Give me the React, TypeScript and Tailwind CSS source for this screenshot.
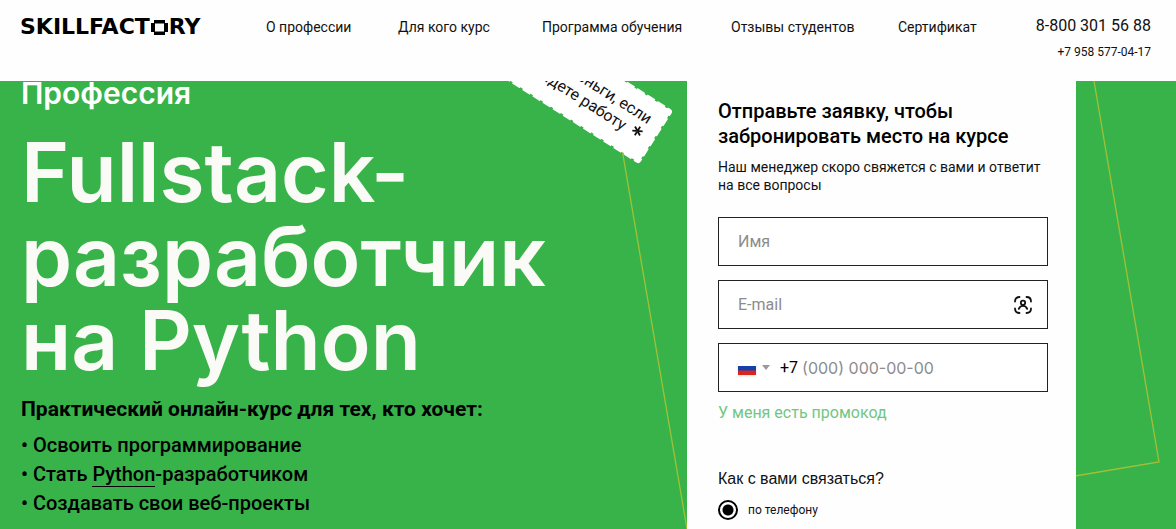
const navItems = [
  'О профессии',
  'Для кого курс',
  'Программа обучения',
  'Отзывы студентов',
  'Сертификат',
];

const field =
  'flex h-[49px] items-center border border-[#222] bg-white px-[19px] text-base text-black';

function Logo() {
  return (
    <a
      href="#"
      aria-label="SKILLFACTORY"
      className="flex items-center font-['DejaVu_Sans',sans-serif] text-[22px] leading-6 font-bold text-black"
    >
      SKILLFACT
      <svg viewBox="0 0 19 15" className="h-[15px] w-[19px]" fill="currentColor" aria-hidden="true">
        <path d="M4 0h11v3.500H4zM4 11.500h11V15H4zM1 3h4v9H1zM14 3h4v9h-4z" />
      </svg>
      RY
    </a>
  );
}

function Header() {
  return (
    <header className="flex h-[81px] items-start bg-[#fefefe] pt-3 pr-[25px] pl-5">
      <div className="w-[246px] shrink-0 pt-[3px]">
        <Logo />
      </div>
      <nav className="grid flex-1 grid-cols-[132fr_144fr_189fr_167fr_80fr] pt-[3px] text-sm leading-6 whitespace-nowrap">
        {navItems.map((item) => (
          <a key={item} href="#">
            {item}
          </a>
        ))}
      </nav>
      <div className="flex w-[173px] shrink-0 flex-col items-end">
        <a href="tel:88003015688" className="text-base leading-7">
          8-800 301 56 88
        </a>
        <a href="tel:+79585770417" className="text-xs leading-6">
          +7 958 577-04-17
        </a>
      </div>
    </header>
  );
}

// Thin outlines and the ticket, anchored to the form on the right
function Decor() {
  return (
    <svg
      className="absolute top-0 right-0 h-[448px] w-[676px]"
      viewBox="500 81 676 448"
      fill="none"
      aria-hidden="true"
    >
      <path d="M617 120 687 529M1094 81l65 381-84 14" stroke="#a2c037" strokeWidth="1.3" />
      <g transform="translate(639 164) rotate(32.500)">
        <rect
          x="-320"
          y="-62"
          width="319"
          height="61"
          rx="2"
          fill="#fff"
          stroke="#fff"
          strokeWidth="2.500"
          strokeDasharray="9 3"
        />
        <g fill="#111" fontSize="16" textAnchor="end">
          <text x="-14" y="-38">Вернем деньги, если</text>
          <text x="-32" y="-19">не найдете работу</text>
        </g>
        <path
          d="M-19-32v10M-23.500-29.500l9 5M-23.500-24.500l9-5"
          stroke="#111"
          strokeWidth="1.800"
        />
      </g>
    </svg>
  );
}

function RequestForm() {
  return (
    <form className="min-w-0 bg-[#fefefe] pt-[18px] pr-7 pl-[31px]">
      <h2 className="text-xl leading-[25px] font-medium text-black">
        Отправьте заявку, чтобы
        <br />
        забронировать место на курсе
      </h2>
      <p className="mt-[9px] text-sm leading-[18px]">
        Наш менеджер скоро свяжется с вами и ответит
        <br />
        на все вопросы
      </p>

      <div className="mt-[23px] flex flex-col gap-3.5">
        <input
          type="text"
          aria-label="Имя"
          placeholder="Имя"
          className={`${field} placeholder:text-[#8c8c8c]`}
        />
        <div className={field}>
          <input
            type="email"
            aria-label="E-mail"
            placeholder="E-mail"
            className="min-w-0 flex-1 outline-none placeholder:text-[#8c8c8c]"
          />
          <button type="button" aria-label="Заполнить контакт" className="-mr-1">
            <svg
              viewBox="0 0 18 18"
              className="size-[18px]"
              fill="none"
              stroke="#111"
              strokeWidth="1.800"
              strokeLinecap="round"
            >
              <path d="M1 5.500Q1 1 5.500 1M12.500 1Q17 1 17 5.500M17 12.500Q17 17 12.500 17M5.500 17Q1 17 1 12.500" />
              <circle cx="9" cy="6.800" r="2.200" />
              <path d="M4.800 12.800Q6 9.800 9 9.800T13.200 12.800" />
            </svg>
          </button>
        </div>
        <div className={field}>
          <button type="button" aria-label="Код страны" className="flex items-center gap-1.5">
            <svg viewBox="0 0 18 14" className="h-3.5 w-[18px] shadow-sm" aria-hidden="true">
              <path fill="#fff" d="M0 0h18v5H0z" />
              <path fill="#1440ad" d="M0 5h18v5H0z" />
              <path fill="#d8261c" d="M0 9.500h18V14H0z" />
            </svg>
            <svg viewBox="0 0 8 5" className="h-[5px] w-2" fill="#999" aria-hidden="true">
              <path d="M0 0h8L4 5z" />
            </svg>
          </button>
          <span className="ml-2.5">+7</span>
          <input
            type="tel"
            aria-label="Телефон"
            placeholder="(000) 000-00-00"
            className="ml-1 min-w-0 flex-1 font-['Inter',sans-serif] outline-none placeholder:text-[#8c8c8c]"
          />
        </div>
      </div>

      <a href="#" className="mt-[9px] block text-base leading-6 text-[#70c783]">
        У меня есть промокод
      </a>

      <fieldset className="mt-[42px]">
        <legend className="font-['Liberation_Sans',Arial,sans-serif] text-base leading-6">
          Как с вами связаться?
        </legend>
        <label className="mt-[9px] flex items-center gap-2.5 text-xs">
          <input
            type="radio"
            name="contact"
            defaultChecked
            className="size-5 appearance-none rounded-full border-2 border-black checked:bg-[radial-gradient(circle,#000_5px,transparent_6px)]"
          />
          по телефону
        </label>
      </fieldset>
    </form>
  );
}

export default function App() {
  return (
    <div className="flex min-h-screen flex-col bg-[#fefefe] font-['Roboto',sans-serif] text-[#111]">
      <Header />
      <main className="relative grid flex-1 grid-cols-[1fr_389px_100px] overflow-hidden bg-[#37b34a]">
        <Decor />
        <section className="pl-[21px]">
          <p className="font-['Inter',sans-serif] text-3xl leading-6 font-semibold text-white">
            Профессия
          </p>
          <h1 className="mt-[26px] font-['Inter',sans-serif] text-[82px] leading-[84px] font-semibold whitespace-nowrap text-[#fafaf6]">
            Fullstack-
            <br />
            разработчик
            <br />
            на Python
          </h1>
          <p className="mt-3 text-[21px] leading-7 font-bold text-black">
            Практический онлайн-курс для тех, кто хочет:
          </p>
          <ul className="mt-2 text-xl leading-[29px] font-medium text-black">
            <li>• Освоить программирование</li>
            <li>
              •{' Стать '}
              <a href="#" className="border-b border-black">
                Python
              </a>
              -разработчиком
            </li>
            <li>• Создавать свои веб-проекты</li>
          </ul>
        </section>
        <div className="relative grid grid-cols-1">
          <RequestForm />
        </div>
      </main>
    </div>
  );
}
